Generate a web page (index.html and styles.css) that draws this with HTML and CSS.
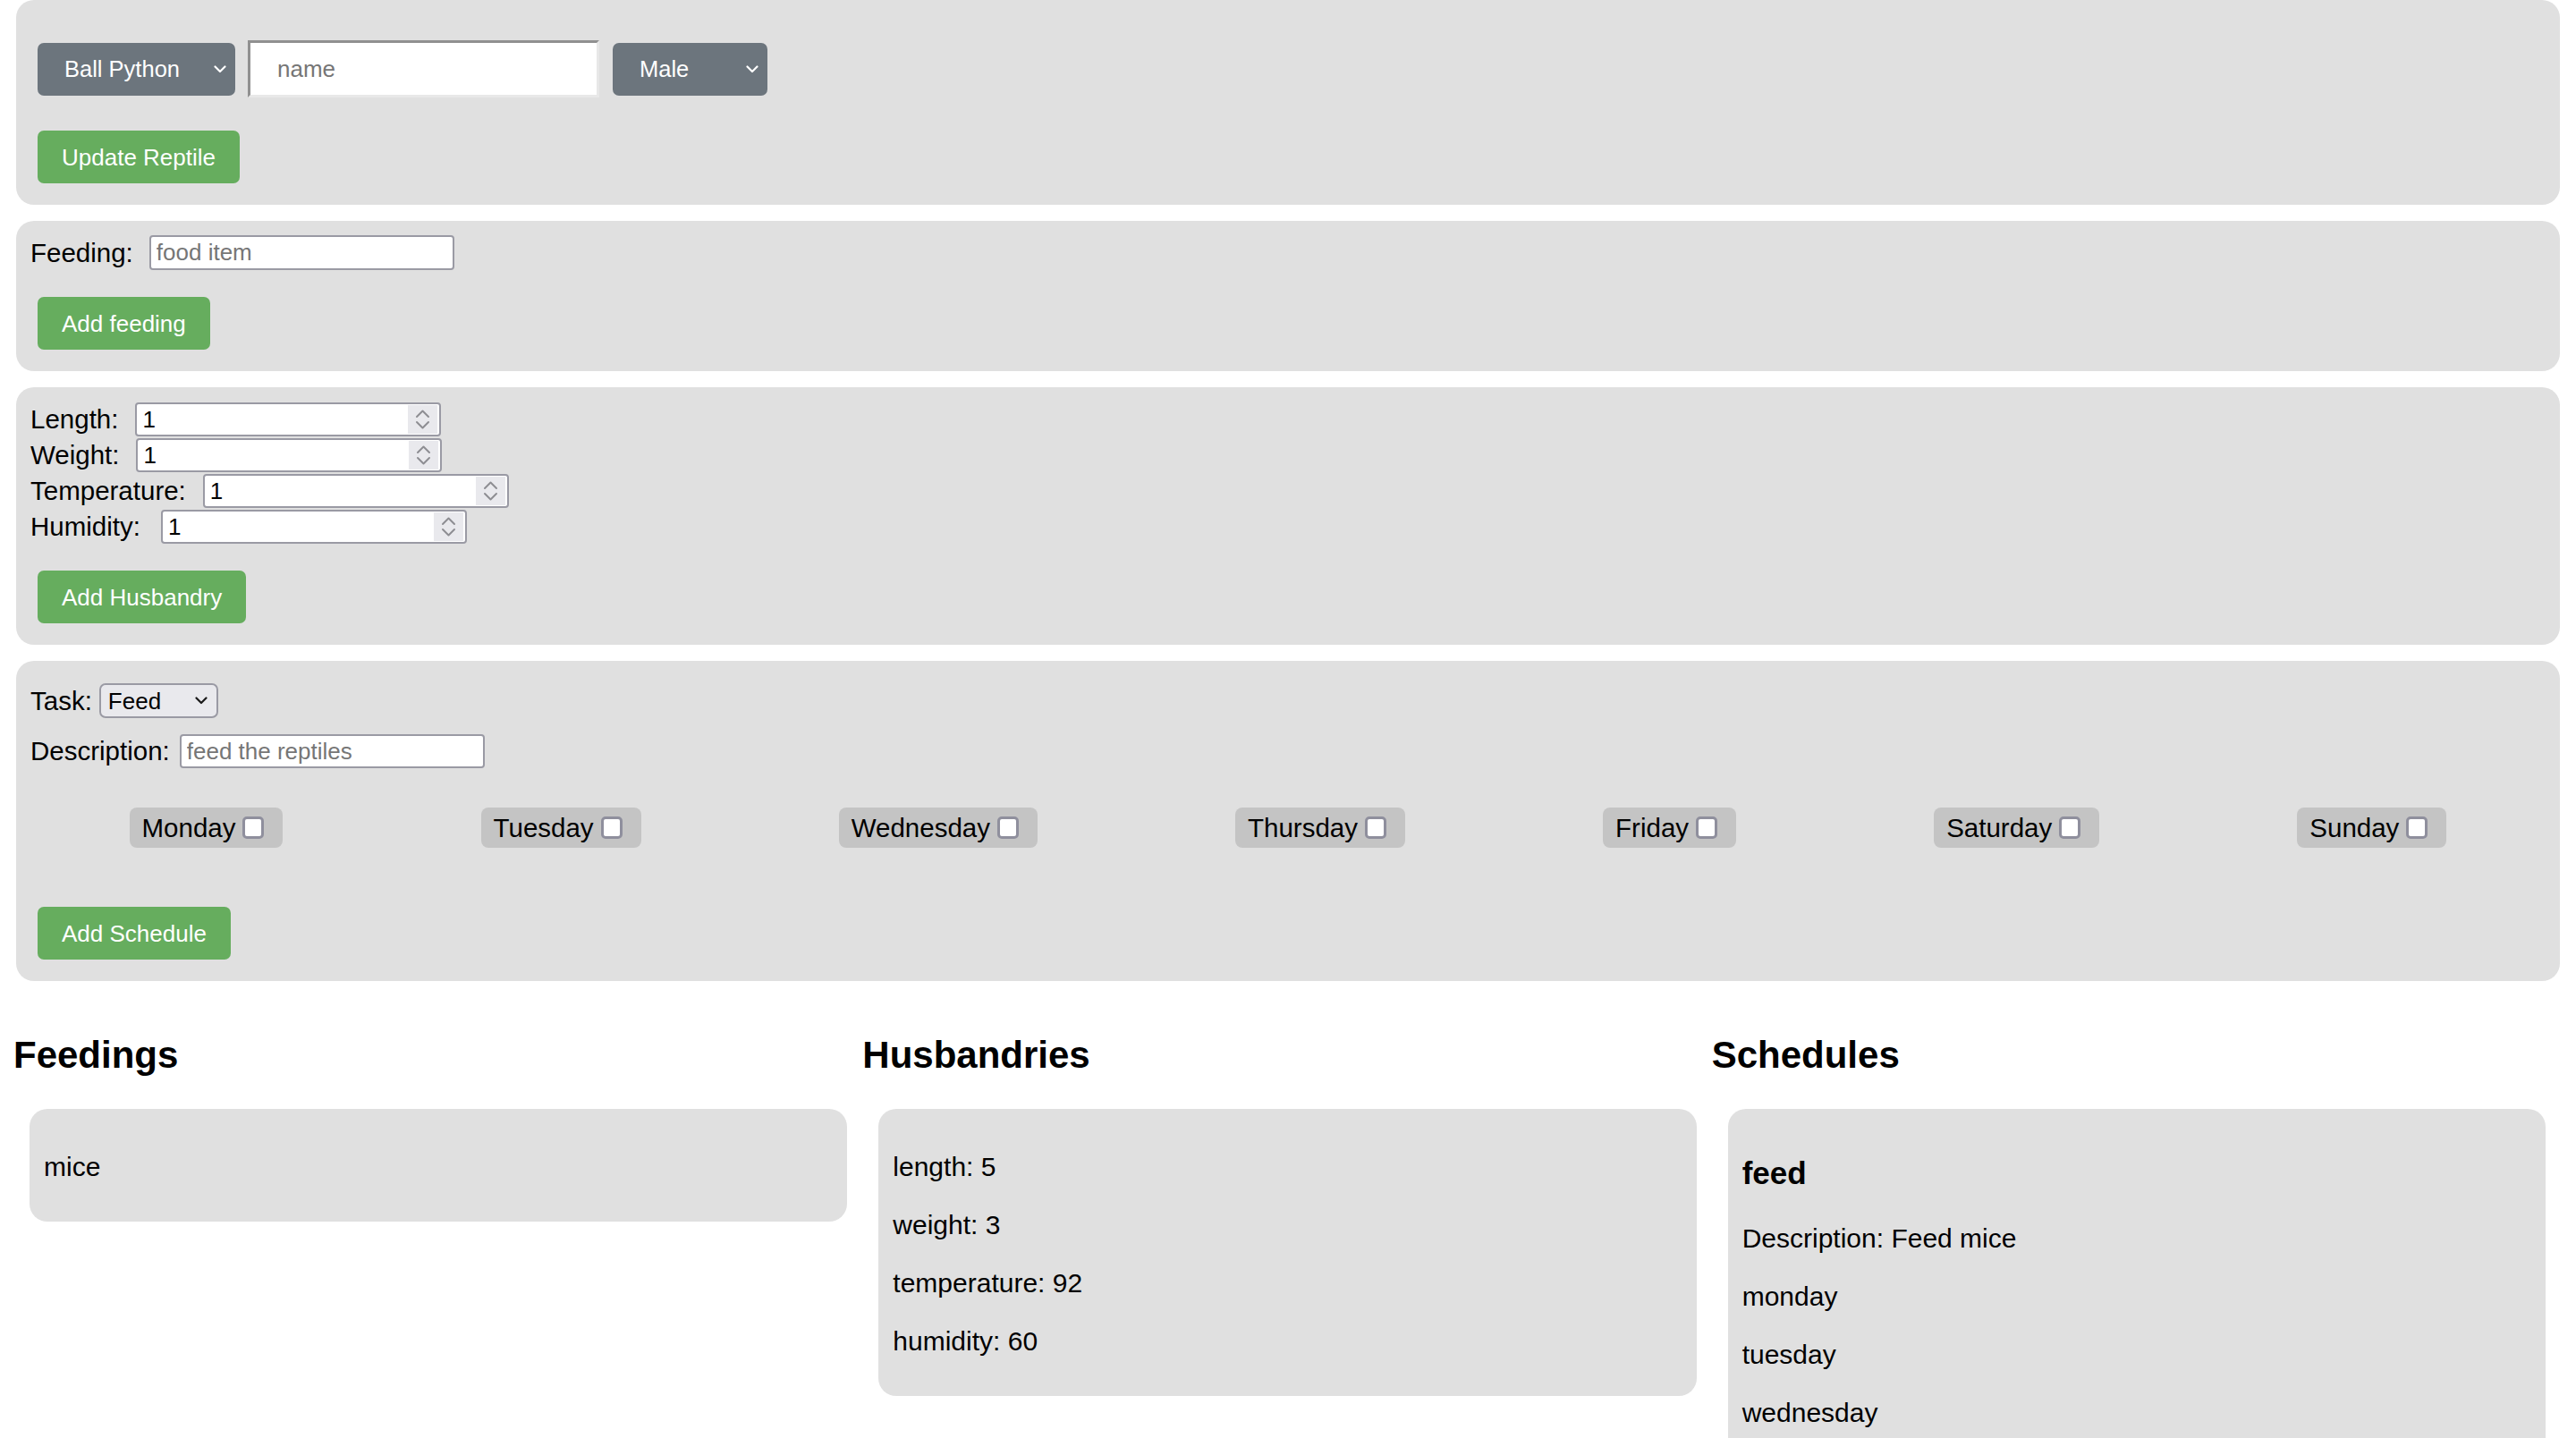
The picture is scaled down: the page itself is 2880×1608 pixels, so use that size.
FILE: index.html
```html
<!DOCTYPE html>
<html lang="en">
<head>
<meta charset="utf-8">
<title>Reptile</title>
<link rel="stylesheet" href="styles.css">
</head>
<body>
<main class="page">
  <section class="panel panel-reptile">
    <div class="reptile-row">
      <div class="select-wrap species">
        <select class="select-dark"><option>Ball Python</option></select>
        <svg class="chev chev-light" viewBox="0 0 14 9"><polyline points="1.5,1.5 7,7 12.5,1.5"/></svg>
      </div>
      <input class="name-input" type="text" placeholder="name">
      <div class="select-wrap sex">
        <select class="select-dark"><option>Male</option></select>
        <svg class="chev chev-light" viewBox="0 0 14 9"><polyline points="1.5,1.5 7,7 12.5,1.5"/></svg>
      </div>
    </div>
    <button class="btn btn-update">Update Reptile</button>
  </section>

  <section class="panel">
    <div class="field-row">
      <label class="lbl">Feeding:</label>
      <input class="text-input feed-input" type="text" placeholder="food item">
    </div>
    <button class="btn btn-after-field">Add feeding</button>
  </section>

  <section class="panel">
    <div class="num-row">
      <label class="lbl">Length:</label>
      <div class="num-wrap">
        <input class="num-input" type="text" value="1">
        <svg class="spin" viewBox="0 0 33 32"><rect width="33" height="32"/><polyline points="10,13 16.5,6.5 23,13"/><polyline points="10,19 16.5,25.5 23,19"/></svg>
      </div>
    </div>
    <div class="num-row">
      <label class="lbl">Weight:</label>
      <div class="num-wrap">
        <input class="num-input" type="text" value="1">
        <svg class="spin" viewBox="0 0 33 32"><rect width="33" height="32"/><polyline points="10,13 16.5,6.5 23,13"/><polyline points="10,19 16.5,25.5 23,19"/></svg>
      </div>
    </div>
    <div class="num-row">
      <label class="lbl">Temperature:</label>
      <div class="num-wrap">
        <input class="num-input" type="text" value="1">
        <svg class="spin" viewBox="0 0 33 32"><rect width="33" height="32"/><polyline points="10,13 16.5,6.5 23,13"/><polyline points="10,19 16.5,25.5 23,19"/></svg>
      </div>
    </div>
    <div class="num-row">
      <label class="lbl">Humidity:</label>
      <div class="num-wrap humid">
        <input class="num-input" type="text" value="1">
        <svg class="spin" viewBox="0 0 33 32"><rect width="33" height="32"/><polyline points="10,13 16.5,6.5 23,13"/><polyline points="10,19 16.5,25.5 23,19"/></svg>
      </div>
    </div>
    <button class="btn btn-husbandry">Add Husbandry</button>
  </section>

  <section class="panel">
    <div class="task-row">
      <label class="lbl">Task:</label>
      <div class="select-wrap task">
        <select class="select-light"><option>Feed</option></select>
        <svg class="chev chev-dark" viewBox="0 0 14 9"><polyline points="1.5,1.5 7,7 12.5,1.5"/></svg>
      </div>
    </div>
    <div class="desc-row">
      <label class="lbl">Description:</label>
      <input class="text-input desc-input" type="text" placeholder="feed the reptiles">
    </div>
    <div class="days">
      <label class="day">Monday<input type="checkbox"></label>
      <label class="day">Tuesday<input type="checkbox"></label>
      <label class="day">Wednesday<input type="checkbox"></label>
      <label class="day">Thursday<input type="checkbox"></label>
      <label class="day">Friday<input type="checkbox"></label>
      <label class="day">Saturday<input type="checkbox"></label>
      <label class="day">Sunday<input type="checkbox"></label>
    </div>
    <button class="btn btn-schedule">Add Schedule</button>
  </section>

  <div class="lists">
    <div class="list-col">
      <h2>Feedings</h2>
      <div class="card">
        <p>mice</p>
      </div>
    </div>
    <div class="list-col">
      <h2>Husbandries</h2>
      <div class="card">
        <p>length: 5</p>
        <p>weight: 3</p>
        <p>temperature: 92</p>
        <p>humidity: 60</p>
      </div>
    </div>
    <div class="list-col">
      <h2>Schedules</h2>
      <div class="card">
        <h3>feed</h3>
        <p>Description: Feed mice</p>
        <p>monday</p>
        <p>tuesday</p>
        <p>wednesday</p>
      </div>
    </div>
  </div>
</main>
</body>
</html>
```

FILE: styles.css
```css
html, body {
  margin: 0;
  padding: 0;
  background: #ffffff;
}

body {
  font-family: "Liberation Sans", Arial, sans-serif;
  font-size: 29.5px;
  color: #000000;
}

.page {
  padding: 0 16px;
}

.panel {
  background: #e0e0e0;
  border-radius: 20px;
  margin: 0 2px 18px;
  padding: 16px 16px 24px;
}

.panel-reptile {
  padding-top: 45px;
}

/* ---------- reptile row ---------- */
.reptile-row {
  display: flex;
  align-items: center;
  height: 64px;
  margin-left: 8px;
}

.select-wrap {
  position: relative;
}

.select-dark {
  appearance: none;
  -webkit-appearance: none;
  display: block;
  box-sizing: border-box;
  height: 59px;
  padding: 0 0 0 30px;
  border: none;
  border-radius: 7px;
  background: #6c757d;
  color: #ffffff;
  font-family: "Liberation Sans", Arial, sans-serif;
  font-size: 25.5px;
}

.species .select-dark {
  width: 221px;
}

.sex .select-dark {
  width: 173px;
}

.chev {
  position: absolute;
  width: 14px;
  height: 9px;
  fill: none;
  stroke-width: 2.2;
  stroke-linecap: round;
  stroke-linejoin: round;
  pointer-events: none;
}

.chev-light {
  stroke: #ffffff;
  top: 25px;
  right: 10px;
}

.chev-dark {
  stroke: #1a1a1a;
  top: 15px;
  right: 12px;
}

.name-input {
  box-sizing: border-box;
  width: 393px;
  height: 64px;
  margin: 0 15px 0 14px;
  padding: 0 0 0 30px;
  border-style: solid;
  border-width: 3px;
  border-color: #909090 #e8e8e8 #e8e8e8 #909090;
  background: #ffffff;
  font-family: "Liberation Sans", Arial, sans-serif;
  font-size: 26px;
  color: #000000;
  outline: none;
}

.name-input::placeholder {
  color: #767676;
}

/* ---------- buttons ---------- */
.btn {
  display: block;
  height: 59px;
  margin: 0 0 0 8px;
  padding: 2px 27px 0;
  border: none;
  border-radius: 7px;
  background: #66ad5e;
  color: #ffffff;
  font-family: "Liberation Sans", Arial, sans-serif;
  font-size: 26px;
}

.btn-update {
  margin-top: 37px;
}

.btn-after-field {
  margin-top: 30px;
}

.btn-husbandry {
  margin-top: 29px;
}

.btn-schedule {
  margin-top: 66px;
}

/* ---------- text fields ---------- */
.field-row {
  display: flex;
  align-items: center;
  height: 39px;
}

.lbl {
  white-space: nowrap;
}

.text-input {
  box-sizing: border-box;
  width: 341px;
  padding: 0 6px;
  border: 2px solid #9a9aa4;
  border-radius: 4px;
  background: #ffffff;
  font-family: "Liberation Sans", Arial, sans-serif;
  font-size: 26px;
  color: #000000;
  outline: none;
}

.text-input::placeholder {
  color: #767676;
}

.feed-input {
  height: 39px;
  margin-left: 18px;
}

/* ---------- number rows ---------- */
.num-row {
  display: flex;
  align-items: center;
  height: 40px;
}

.num-wrap {
  position: relative;
  margin-left: 19px;
}

.num-wrap.humid {
  margin-left: 23px;
}

.num-input {
  display: block;
  box-sizing: border-box;
  width: 342px;
  height: 38px;
  padding: 0 6px;
  border: 2px solid #9a9aa4;
  border-radius: 4px;
  background: #ffffff;
  font-family: "Liberation Sans", Arial, sans-serif;
  font-size: 26px;
  color: #000000;
  outline: none;
}

.spin {
  position: absolute;
  top: 3px;
  right: 4px;
  width: 33px;
  height: 32px;
  fill: none;
  stroke: #8e8e93;
  stroke-width: 2;
  stroke-linecap: round;
  stroke-linejoin: round;
}

.spin rect {
  fill: #e9e9ed;
  stroke: none;
}

/* ---------- schedule ---------- */
.task-row {
  display: flex;
  align-items: center;
  height: 39px;
  margin-top: 9px;
}

.task {
  margin-left: 8px;
}

.select-light {
  appearance: none;
  -webkit-appearance: none;
  display: block;
  box-sizing: border-box;
  width: 133px;
  height: 39px;
  padding: 0 0 0 8px;
  border: 2px solid #9a9aa4;
  border-radius: 7px;
  background: #e9e9ed;
  color: #000000;
  font-family: "Liberation Sans", Arial, sans-serif;
  font-size: 26px;
}

.desc-row {
  display: flex;
  align-items: center;
  height: 38px;
  margin-top: 18px;
}

.desc-input {
  height: 38px;
  margin-left: 11px;
}

.days {
  display: flex;
  justify-content: space-around;
  margin-top: 44px;
}

.day {
  display: flex;
  align-items: center;
  height: 45px;
  padding: 0 15px 0 14px;
  border-radius: 8px;
  background: #c4c4c4;
  font-size: 29.5px;
  white-space: nowrap;
}

.day input {
  appearance: none;
  -webkit-appearance: none;
  box-sizing: border-box;
  width: 24px;
  height: 25px;
  margin: 0 6px 0 8px;
  border: 3px solid #8f8f9d;
  border-radius: 5px;
  background: #ffffff;
}

/* ---------- lists ---------- */
.lists {
  display: grid;
  grid-template-columns: repeat(3, 1fr);
}

.list-col h2 {
  font-size: 42px;
  font-weight: 700;
  margin: 41px 0 36px -1px;
}

.card {
  margin: 0 18px 0 17px;
  padding: 17px 16px 14px;
  border-radius: 20px;
  background: #e0e0e0;
}

.card p {
  margin: 30px 0;
  font-size: 30px;
  line-height: 35px;
}

.card h3 {
  margin: 35px 0;
  font-size: 35px;
  line-height: 40px;
  font-weight: 700;
}
```
